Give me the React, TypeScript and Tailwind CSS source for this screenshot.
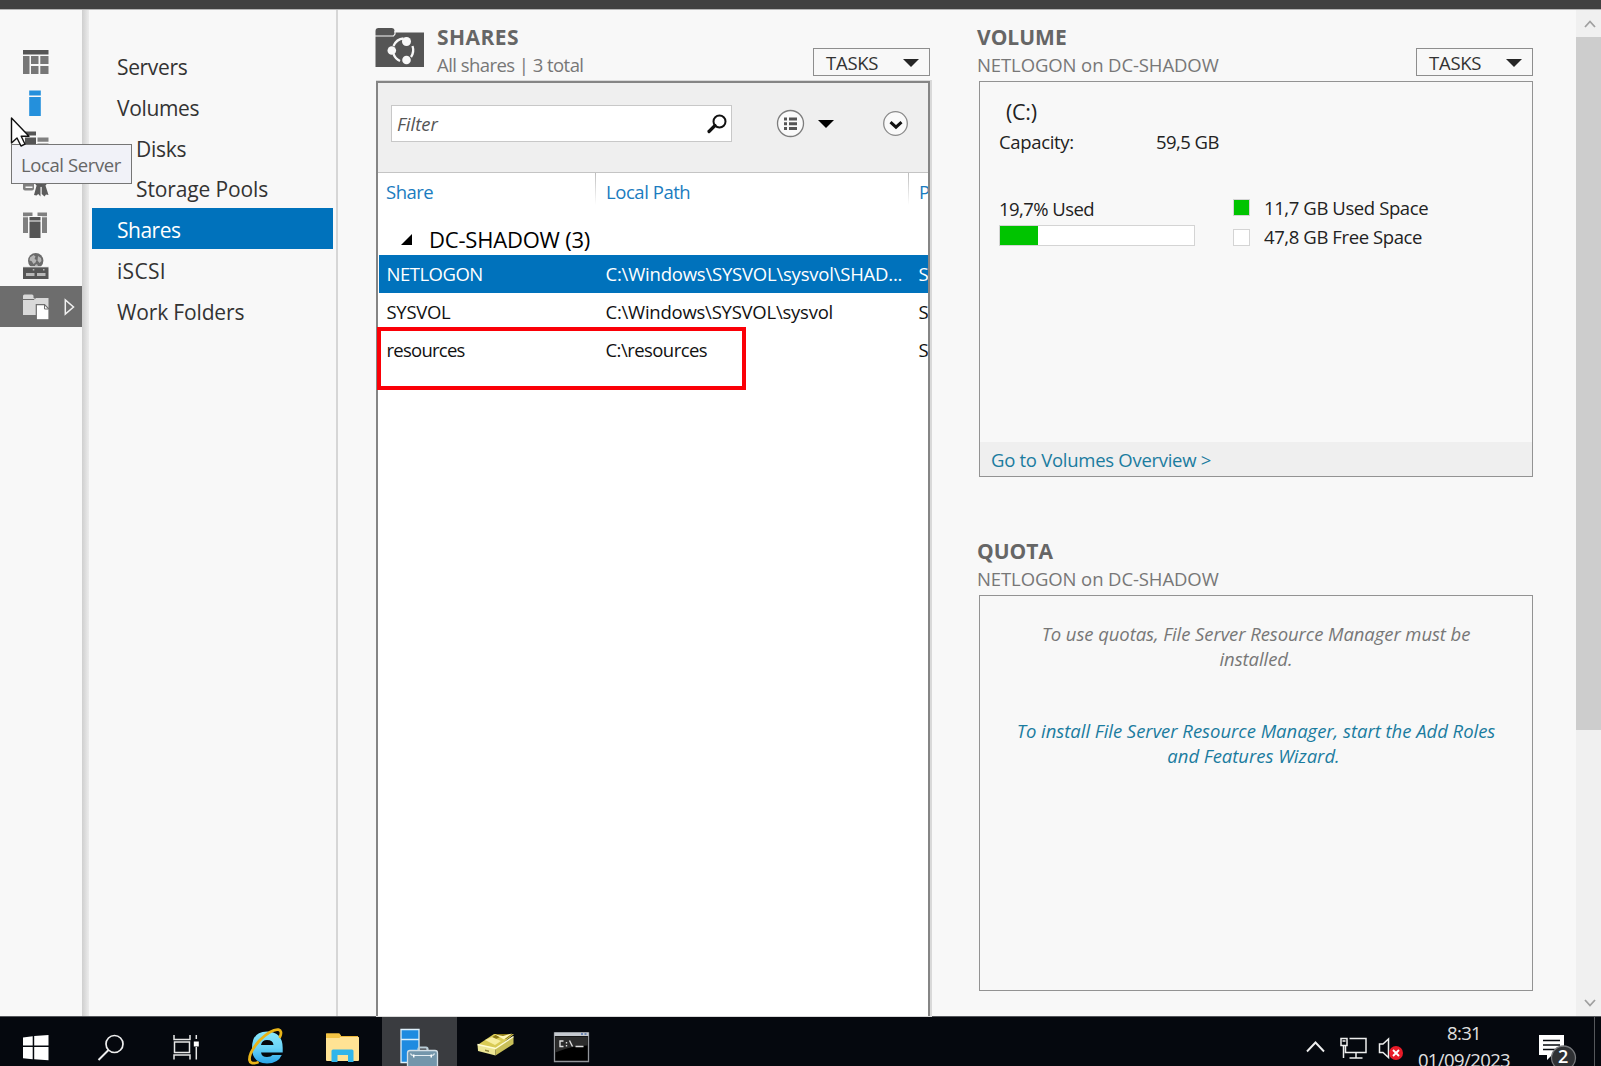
import React from 'react';

const FONT = "font-['Open_Sans','Noto_Sans',sans-serif]";

interface NavItem {
  label: string;
  indent?: boolean;
  active?: boolean;
  tracking: string;
}

interface Share {
  name: string;
  path: string;
  selected?: boolean;
  nameTracking: string;
  pathTracking: string;
}

const NAV_ITEMS: NavItem[] = [
  { label: 'Servers', tracking: 'tracking-[-0.35px]' },
  { label: 'Volumes', tracking: 'tracking-[-0.35px]' },
  { label: 'Disks', indent: true, tracking: 'tracking-[-0.3px]' },
  { label: 'Storage Pools', indent: true, tracking: 'tracking-[-0.12px]' },
  { label: 'Shares', active: true, tracking: 'tracking-[-0.5px]' },
  { label: 'iSCSI', tracking: 'tracking-[0.3px]' },
  { label: 'Work Folders', tracking: 'tracking-[-0.15px]' },
];

const SHARES: Share[] = [
  { name: 'NETLOGON', path: 'C:\\Windows\\SYSVOL\\sysvol\\SHAD...', selected: true, nameTracking: 'tracking-[-0.5px]', pathTracking: 'tracking-[-0.21px]' },
  { name: 'SYSVOL', path: 'C:\\Windows\\SYSVOL\\sysvol', nameTracking: 'tracking-[-0.3px]', pathTracking: 'tracking-[-0.24px]' },
  { name: 'resources', path: 'C:\\resources', nameTracking: 'tracking-[-0.75px]', pathTracking: 'tracking-[-0.55px]' },
];

/* ---------- left icon rail ---------- */

const RailIcons: React.ReactNode[] = [
  // dashboard
  <svg key="dash" width="26" height="26" viewBox="0 0 26 26">
    <path fill="#555" d="M0 1h25.5v4.5H0z" />
    <path fill="#777" d="M0 7h6.5v18H0zM8 7h7.5v8H8zM17.3 7h8.2v8h-8.2zM8 17h7.5v8H8zM17.3 17h8.2v8h-8.2z" />
  </svg>,
  // local server
  <svg key="local" width="26" height="26" viewBox="0 0 26 26">
    <path fill="#2490dc" d="M6.2.5h11.6v5H6.2zM6.2 7h11.6v19H6.2z" />
  </svg>,
  // all servers
  <svg key="all" width="26" height="26" viewBox="0 0 26 26">
    <path fill="#555" d="M2 1.5h11v4H2zM2 7.5h11v18H2z" />
    <path fill="#808080" d="M14.5 7.5h11v4.3h-11zM14.5 13.5h11v12h-11z" />
  </svg>,
  // certificate services
  <svg key="cert" width="26" height="26" viewBox="0 0 26 26">
    <path fill="#808080" d="M0 2h11v15.5q0 2-2 2H2q-2 0-2-2z" />
    <path fill="#f8f8f8" d="M2.500 15.500h7V17h-7z" />
    <circle cx="18" cy="9" r="7" fill="#555" />
    <path fill="#5c5c5c" d="M14 13h3.500v12.500l-2.300-2.500-1.700 1.500-2.500-.5zM18.700 13H22l3.500 11-2.500-.5-1.500 2-2.800-2.500z" />
  </svg>,
  // domain services
  <svg key="adds" width="26" height="26" viewBox="0 0 26 26">
    <path fill="#808080" d="M0 .5h9.500V4H5v17H0zM14.500.5H24V21h-5V4h-4.500z" />
    <path fill="#f8f8f8" d="M0 4.200h5v1H0zM19 4.200h5v1h-5z" />
    <path fill="#555" d="M6.500 5h11v3.500h-11zM6.500 9.500h11V26h-11z" />
  </svg>,
  // dns
  <svg key="dns" width="26" height="26" viewBox="0 0 26 26">
    <circle cx="12.700" cy="7.800" r="7.700" fill="#6b6b6b" />
    <path fill="#b5b5b5" d="M7 4.500l3.500-2.500 2 1.500-1 2.500 2 1-1 2.500-2 1.500-2-3-2-.5zM15 3l3 2 .5 3-2 2-2-2.500zM12 12l2-1 1 2h-3z" />
    <path fill="#555" stroke="#f8f8f8" strokeWidth="1" d="M-.5 13.800h26.500V27H-.5z" />
    <path fill="#b8b8b8" d="M3 20h8.500v3H3zM14 20h8.500v3H14zM9.800 16h1.500v1.500H9.800zM20 16h1.500v1.500H20z" />
  </svg>,
  // file and storage services
  <svg key="files" className="mt-[2px]" width="26" height="26" viewBox="0 0 26 26">
    <path fill="#d9d9d9" d="M0 2q0-1.500 1.500-1.500h7.500q1.500 0 1.500 1.500v2h15V21H0z" />
    <path fill="none" stroke="#6d6d6d" strokeWidth="1" d="M0 5.500h11l1.500-1.500" />
    <path fill="#fff" stroke="#6d6d6d" strokeWidth="1.200" d="M13.300 10.600h8.200l4.500 4.400v10.800H13.300z" />
    <path fill="none" stroke="#6d6d6d" strokeWidth="1" d="M21.500 11v4h4" />
  </svg>,
];

function IconRail() {
  return (
    <div className="w-[82px] shrink-0 pt-[31.5px]">
      {RailIcons.map((icon, i) => (
        <div
          key={i}
          className={`h-[40.75px] flex items-center pl-[23px] ${i === RailIcons.length - 1 ? 'bg-[#6d6d6d]' : ''}`}
        >
          {icon}
          {i === RailIcons.length - 1 && (
            <svg className="ml-[15px] mt-[2px]" width="12" height="18" viewBox="0 0 12 18">
              <path d="M1.300 2v14L9.500 9z" fill="none" stroke="#f0f0f0" strokeWidth="1.500" />
            </svg>
          )}
        </div>
      ))}
    </div>
  );
}

function SideNav() {
  return (
    <div className="w-[247px] shrink-0 pt-[35px] pl-[3px] pr-[3px] text-[21px] text-[#333]">
      {NAV_ITEMS.map((item) => (
        <div
          key={item.label}
          className={`h-[40.75px] flex items-center pt-[5px] ${item.indent ? 'pl-[44px]' : 'pl-[25px]'} ${item.active ? 'bg-[#0072bc] text-white' : ''} ${item.tracking}`}
        >
          {item.label}
        </div>
      ))}
    </div>
  );
}

/* ---------- tiles ---------- */

function TasksButton() {
  return (
    <div className="w-[117px] h-[28px] border border-[#8e8e8e] flex items-center justify-between pl-[12px] pr-[10px] text-[18.5px] tracking-[-0.25px] text-[#333]">
      <span className="pt-[2px]">TASKS</span>
      <svg className="mt-[1px]" width="16" height="8" viewBox="0 0 16 8">
        <path d="M0 0h16L8 8z" fill="#262626" />
      </svg>
    </div>
  );
}

function TileHeading({ title, subtitle, tight }: { title: string; subtitle: string; tight?: boolean }) {
  return (
    <div className="whitespace-nowrap">
      <div className="h-7 leading-7 text-[21px] font-bold text-[#666]">
        <span className={tight ? 'tracking-[0.45px]' : ''}>{title}</span>
      </div>
      <div className={`h-7 leading-[27px] text-[18.5px] text-[#777] ${tight ? 'tracking-[-0.55px]' : 'tracking-[-0.1px]'}`}>{subtitle}</div>
    </div>
  );
}

function ColumnDivider() {
  return <div className="w-px shrink-0 h-[32px] bg-linear-to-b from-[#bdbdbd] to-white" />;
}

function SharesTile() {
  return (
    <div className="w-[555px] shrink-0 pt-[13px] flex flex-col">
      <div className="h-[58px] flex items-start">
        <svg className="mt-[4px]" width="49" height="42" viewBox="0 0 49 42">
          <path fill="#555" d="M.5 4q0-3 3-3h13q3 0 3 3v1.500H49V40H.5z" />
          <path fill="none" stroke="#f8f8f8" strokeWidth="1.200" d="M0 9h18.500l1.500-2V4" />
          <g fill="none" stroke="#f8f8f8" strokeWidth="2.300">
            <path d="M18.500 19q3-7 10-7.500M37.500 19q2 6-1.500 11M18.500 27q2 5 6.500 7" />
          </g>
          <circle cx="31.500" cy="14.500" r="4.500" fill="#f8f8f8" />
          <circle cx="16.800" cy="23.500" r="4.300" fill="#f8f8f8" />
          <circle cx="31.500" cy="33" r="4.300" fill="#f8f8f8" />
        </svg>
        <div className="ml-[13px]">
          <TileHeading title="SHARES" subtitle="All shares | 3 total" tight />
        </div>
        <div className="ml-auto mt-[25px]">
          <TasksButton />
        </div>
      </div>

      <div className="relative ml-[1px] flex-1 bg-white border-2 border-b-0 border-[#858585] shadow-[1px_0_0_1px_#d9d9d9] flex flex-col">
        <div className="h-[90px] shrink-0 bg-[#efefef] border-b border-[#c4c4c4] flex items-start pl-[13px]">
          <div className="mt-[22px] w-[341px] h-[37px] bg-white border border-[#c8c8c8] flex items-center justify-between pl-[5px] pr-[3px]">
            <span className="pt-[1px] text-[18.5px] italic text-[#555]">Filter</span>
            <svg width="22" height="22" viewBox="0 0 22 22">
              <circle cx="13.500" cy="8.500" r="6" fill="none" stroke="#111" strokeWidth="2" />
              <path d="M9 12.500L3 18.500" stroke="#111" strokeWidth="3.200" strokeLinecap="round" />
            </svg>
          </div>
          <svg className="ml-[44px] mt-[26px]" width="30" height="30" viewBox="0 0 30 30">
            <circle cx="14.500" cy="14.500" r="13" fill="#fafafa" stroke="#7d7d7d" strokeWidth="1.300" />
            <path fill="#555" d="M8 8.500h3v3H8zM13 8.500h8v3h-8zM8 13.200h3v3H8zM13 13.200h8v3h-8zM8 18h3v3H8zM13 18h8v3h-8z" />
          </svg>
          <svg className="ml-[12px] mt-[37px]" width="16" height="8" viewBox="0 0 16 8">
            <path d="M0 0h16L8 8z" fill="#000" />
          </svg>
          <svg className="ml-[49px] mt-[27px]" width="26" height="26" viewBox="0 0 26 26">
            <circle cx="12.500" cy="13.500" r="11.800" fill="#fafafa" stroke="#8a8a8a" strokeWidth="1.300" />
            <path d="M7.500 12.200l5.500 5 5.500-5" fill="none" stroke="#111" strokeWidth="3" />
          </svg>
        </div>

        <div className="h-[39px] shrink-0 flex overflow-hidden text-[18.5px] leading-[38px] text-[#1a7cc0]">
          <div className="w-[217px] shrink-0 pl-[8px] tracking-[-0.5px]">Share</div>
          <ColumnDivider />
          <div className="w-[312px] shrink-0 pl-[10px] tracking-[-0.45px]">Local Path</div>
          <ColumnDivider />
          <div className="pl-[10px]">P</div>
        </div>

        <div className="mt-[11px] h-[32px] shrink-0 flex items-center pl-[23px] text-[22px] text-black">
          <svg className="mt-[1px]" width="11" height="11" viewBox="0 0 11 11">
            <path d="M11 0v11H0z" fill="#000" />
          </svg>
          <span className="ml-[17px] tracking-[-0.2px]">DC-SHADOW (3)</span>
        </div>

        {SHARES.map((s) => (
          <div
            key={s.name}
            className={`ml-[1px] h-[38px] shrink-0 flex items-center overflow-hidden whitespace-nowrap pl-[7.500px] text-[18.5px] ${s.selected ? 'bg-[#0072bc] text-white' : 'text-[#111]'}`}
          >
            <div className={`w-[219px] shrink-0 ${s.nameTracking}`}>{s.name}</div>
            <div className={`w-[313px] shrink-0 ${s.pathTracking}`}>{s.path}</div>
            <div className="shrink-0">S</div>
          </div>
        ))}

        {/* highlight over the resources share */}
        <div className="absolute left-[-1px] top-[244px] w-[369px] h-[63px] border-4 border-[#fb0007]" />
      </div>
    </div>
  );
}

function VolumeTile() {
  return (
    <div>
      <div className="h-[58px] flex items-start justify-between">
        <TileHeading title="VOLUME" subtitle="NETLOGON on DC-SHADOW" />
        <div className="mt-[25px]">
          <TasksButton />
        </div>
      </div>
      <div className="ml-[2px] h-[396px] border border-[#939393] flex flex-col text-[18.5px] text-[#222]">
        <div className="pt-[15px] pl-[26px] leading-[30px] text-[21.5px] tracking-[-0.3px]">(C:)</div>
        <div className="pl-[19px] flex leading-[29px]">
          <div className="w-[157px] tracking-[-0.35px]">Capacity:</div>
          <div className="tracking-[-0.55px]">59,5 GB</div>
        </div>
        <div className="mt-[37px] pl-[19px] flex items-start">
          <div className="w-[196px]">
            <div className="leading-[30px] tracking-[-0.55px] pt-[1px] pb-[1px]">19,7% Used</div>
            <div className="h-[21px] bg-white border border-[#d4d4d4]">
              <div className="h-full bg-[#00c400]" style={{ width: '19.7%' }} />
            </div>
          </div>
          <div className="ml-[38px] leading-[30px]">
            {[
              { color: 'bg-[#00c400]', label: '11,7 GB Used Space' },
              { color: 'bg-white', label: '47,8 GB Free Space' },
            ].map((l) => (
              <div key={l.label} className="h-[29.500px] flex items-center tracking-[-0.4px]">
                <div className={`w-[17px] h-[17px] border border-[#d4d4d4] ${l.color}`} />
                <span className="ml-[14px]">{l.label}</span>
              </div>
            ))}
          </div>
        </div>
        <div className="mt-auto h-[34px] bg-[#efefef] flex items-center pl-[11px] pt-px text-[#1b7c9f] tracking-[-0.28px]">
          Go to Volumes Overview &gt;
        </div>
      </div>
    </div>
  );
}

function QuotaTile() {
  return (
    <div className="mt-[60px]">
      <div className="h-[58px]">
        <TileHeading title="QUOTA" subtitle="NETLOGON on DC-SHADOW" />
      </div>
      <div className="ml-[2px] h-[396px] border border-[#939393] pt-[25px] text-center italic text-[18.5px] leading-[25px] text-[#777]">
        <p className="tracking-[-0.08px]">
          To use quotas, File Server Resource Manager must be
          <br />
          installed.
        </p>
        <p className="mt-[47px] tracking-[-0.03px] text-[#1b7c9f]">
          To install File Server Resource Manager, start the Add Roles
          <br />
          <span className="pr-[5px]">and Features Wizard.</span>
        </p>
      </div>
    </div>
  );
}

function Scrollbar() {
  return (
    <div className="ml-auto w-[25px] shrink-0 bg-[#f0f0f0] flex flex-col items-center justify-between">
      <div className="w-full flex flex-col">
        <div className="h-[27px] flex items-center justify-center">
          <svg className="ml-[2px]" width="12" height="8" viewBox="0 0 12 8">
            <path d="M1 7l5-5.500L11 7" fill="none" stroke="#a0a0a0" strokeWidth="1.800" />
          </svg>
        </div>
        <div className="h-[693px] bg-[#cdcdcd]" />
      </div>
      <div className="h-[27px] flex items-center justify-center">
        <svg className="ml-[2px]" width="12" height="8" viewBox="0 0 12 8">
          <path d="M1 1l5 5.500L11 1" fill="none" stroke="#a0a0a0" strokeWidth="1.800" />
        </svg>
      </div>
    </div>
  );
}

/* ---------- taskbar ---------- */

function Taskbar() {
  return (
    <div className="h-[50px] shrink-0 bg-[#05080e] border-t border-[#55575b] flex items-start overflow-hidden">
      {/* start */}
      <svg width="73" height="49" viewBox="0 0 73 49">
        <path fill="#fff" d="M23 20.500l9.700-1.300v9.300H23zM34.200 19L48.500 18v10.500H34.200zM23 30h9.700v12.300L23 41.300zM34.200 30h14.300v13.300l-14.300-1z" />
      </svg>
      {/* search */}
      <svg width="75" height="49" viewBox="0 0 75 49">
        <circle cx="41.500" cy="27" r="8.500" fill="none" stroke="#eee" strokeWidth="1.700" />
        <path d="M35.500 33L25.500 43" stroke="#eee" strokeWidth="1.900" />
      </svg>
      {/* task view */}
      <svg width="80" height="49" viewBox="0 0 80 49">
        <g fill="none" stroke="#e6e6e6" strokeWidth="1.500">
          <path d="M26 18v4.500h16V18M26 42.500V38h16v4.500M26.500 25h15v10.500h-15zM48.300 18v4M48.300 30v12.500" />
        </g>
        <path fill="#fff" d="M45.800 24.500h5v5h-5z" />
      </svg>
      {/* internet explorer */}
      <svg width="76" height="49" viewBox="0 0 76 49">
        <defs>
          <linearGradient id="ie" x1="0" y1="0" x2="0" y2="1">
            <stop offset="0" stopColor="#8be8fb" />
            <stop offset="0.5" stopColor="#6ad4f8" />
            <stop offset="1" stopColor="#2aa5ea" />
          </linearGradient>
        </defs>
        <path
          fill="url(#ie)"
          d="M54.500 35.500H33q.7 4.500 6 4.500 4 0 5.500-2h9.300Q50 46.500 39 46.500 24 46 24 31 24 14.500 39 14.500 55 15 54.700 31.500v4zM45.500 28q-.5-5-6.500-5-5 0-6 5z"
        />
        <path
          d="M29.500 45.500q-7.500 2-8-2.500Q21 35 32 23 44 11.500 50.500 12.700q4 1.200 1.500 7"
          fill="none"
          stroke="#e9b418"
          strokeWidth="2.800"
          strokeLinecap="round"
        />
      </svg>
      {/* file explorer */}
      <svg width="78" height="49" viewBox="0 0 78 49">
        <path fill="#f0b93a" d="M22 17.500q0-1 1-1h12l2 2.500h17v6H22z" />
        <path fill="#ffe394" d="M22 20h32.500q.5 0 .5.500V43q0 1-1 1H23q-1 0-1-1z" />
        <path fill="#f5c444" d="M22 16.500h13.500l1.500 2-1.500 2.500H22z" />
        <path fill="#31b5ea" d="M27.500 45V34q0-1.500 1.500-1.500h19q1.500 0 1.500 1.500v11H44v-7H33.500v7z" />
      </svg>
      {/* server manager */}
      <div className="w-[75px] h-[49px] bg-[#3a3c40]">
        <svg width="75" height="49" viewBox="0 0 75 49">
          <path fill="#1f8be0" stroke="#dff1fc" strokeWidth="1.300" d="M19 12.500h18v33H19z" />
          <path stroke="#dff1fc" strokeWidth="1.500" d="M19 22.500h18" />
          <path fill="none" stroke="#b9ccd6" strokeWidth="2.200" d="M36.500 34v-2q0-1.500 1.500-1.500h6q1.500 0 1.500 1.500v2" />
          <rect x="25.500" y="33.500" width="30" height="18" rx="2.500" fill="#7396ab" stroke="#d3dfe6" strokeWidth="1.300" />
          <path fill="none" stroke="#e4edf2" strokeWidth="1.200" d="M28.500 36.500q.5 2 3 2h18q2.500 0 3-2" />
          <path fill="#fff" d="M31 37.500h1.500v3H31zM48.500 37.500H50v3h-1.500z" />
        </svg>
      </div>
      {/* file drawer */}
      <svg width="76" height="49" viewBox="0 0 76 49">
        <path fill="#d9cb55" d="M20.500 28L37 17l20 0-19 16z" />
        <path fill="#8d7a16" d="M33 21.500l7-4.500h16l-7 5-6-2-6 3z" />
        <path fill="#f7eea0" d="M28 23l7-3 9 4-6 4z" />
        <path fill="#fff7b8" d="M38 17.500l8 1.500 9-2.500-8 6z" />
        <path fill="#ece695" d="M20.500 27.500L38.500 31v7.500L21 34z" />
        <path fill="#c9bf59" d="M38.500 31L56.500 19.500V27L38.500 38.500z" />
        <path fill="none" stroke="#fffcd2" strokeWidth="1.400" d="M20.500 27.500l18 4 18-12" />
        <path fill="#8c8338" d="M28 32.500l4 1v1.500l-4-1z" />
      </svg>
      {/* command prompt */}
      <svg width="76" height="49" viewBox="0 0 76 49">
        <path fill="#000" stroke="#92959a" strokeWidth="1.300" d="M21.500 16h34v28.500h-34z" />
        <path fill="#c6cad0" d="M21.500 15.500h34v3.500h-34z" />
        <path fill="#6f87b4" d="M48 16h2v2h-2zM51.500 16h2v2h-2z" />
        <path fill="#2c2c2c" d="M22.200 19.500h32.600v9q-16 0-32.600 7z" />
        <path
          fill="none"
          stroke="#ddd"
          strokeWidth="1.400"
          d="M30.500 24h-3.500v5.500h3.500M33.500 25v1.500M33.500 28v1.500M36.500 23.500l3 6M42.500 29.500h8"
        />
      </svg>

      <div className="ml-auto flex items-start">
        <svg width="100" height="49" viewBox="0 0 100 49">
          <path d="M2 34.500l8.500-9 8.500 9" fill="none" stroke="#eee" strokeWidth="1.900" />
          <g fill="none" stroke="#eee" strokeWidth="1.500">
            <path d="M44.500 21.500h16.500v14H40.500v-7M51 36v5M44.500 41h13M36 21.500h6v7h-6zM38.500 28.500V41M37.500 24h3" />
          </g>
          <path d="M74.500 27h3.500l5.500-5v18.500l-5.500-5h-3.500z" fill="none" stroke="#eee" strokeWidth="1.500" />
          <circle cx="91" cy="36" r="7" fill="#e81b28" />
          <path d="M88 33l6 6M94 33l-6 6" stroke="#fff" strokeWidth="1.900" />
        </svg>
        <div className="ml-[12px] mt-[2px] w-[94px] text-center text-[18.5px] leading-[27px] text-[#e0e0e0] whitespace-nowrap">
          <div className="tracking-[-0.7px]">8:31</div>
          <div className="tracking-[-0.6px]">01/09/2023</div>
        </div>
        <div className="relative ml-[24px] w-[59px] h-[49px]">
          <svg width="59" height="49" viewBox="0 0 59 49">
            <path fill="#fff" d="M4 18h25v20H17l-5 5v-5H4z" />
            <path stroke="#05080e" strokeWidth="1.500" d="M8 23.500h17M8 28h17M8 32.500h12" />
            <circle cx="28.500" cy="41" r="12" fill="#2f3134" stroke="#77797c" strokeWidth="1.300" />
          </svg>
          <span className="absolute left-[23px] top-[29px] text-[18px] leading-[20px] font-semibold text-white">2</span>
        </div>
        <div className="w-px h-[49px] bg-[#55575b] mr-[6px]" />
      </div>
    </div>
  );
}

export default function App() {
  return (
    <div className={`relative w-[1601px] h-[1066px] overflow-hidden bg-[#f8f8f8] flex flex-col ${FONT}`}>
      <div className="h-[10px] shrink-0 bg-[#414141] border-b border-[#b5b5b5]" />
      <div className="flex-1 min-h-0 flex">
        <IconRail />
        <div className="w-[7px] shrink-0 bg-linear-to-r from-[#cfcfcf] to-[#ececec]" />
        <SideNav />
        <div className="w-[2px] shrink-0 bg-[#d6d6d6]" />
        <div className="ml-[37px] flex">
          <SharesTile />
        </div>
        <div className="ml-[47px] w-[556px] shrink-0 pt-[13px]">
          <VolumeTile />
          <QuotaTile />
        </div>
        <Scrollbar />
      </div>
      <Taskbar />

      {/* hover tooltip and pointer */}
      <div className="absolute left-[11px] top-[144px] w-[121px] h-[40px] bg-[#f1f2f8] border border-[#767676] flex items-center pl-[9px] pt-[2px] text-[18.5px] tracking-[-0.4px] text-[#666] whitespace-nowrap">
        Local Server
      </div>
      <svg className="absolute left-[10px] top-[116px]" width="22" height="32" viewBox="0 0 22 32">
        <path d="M1.500 2v25l5.500-5 4 8 4-1.800-3.800-8h7.800z" fill="#fff" stroke="#111" strokeWidth="1.400" strokeLinejoin="round" />
      </svg>
    </div>
  );
}
